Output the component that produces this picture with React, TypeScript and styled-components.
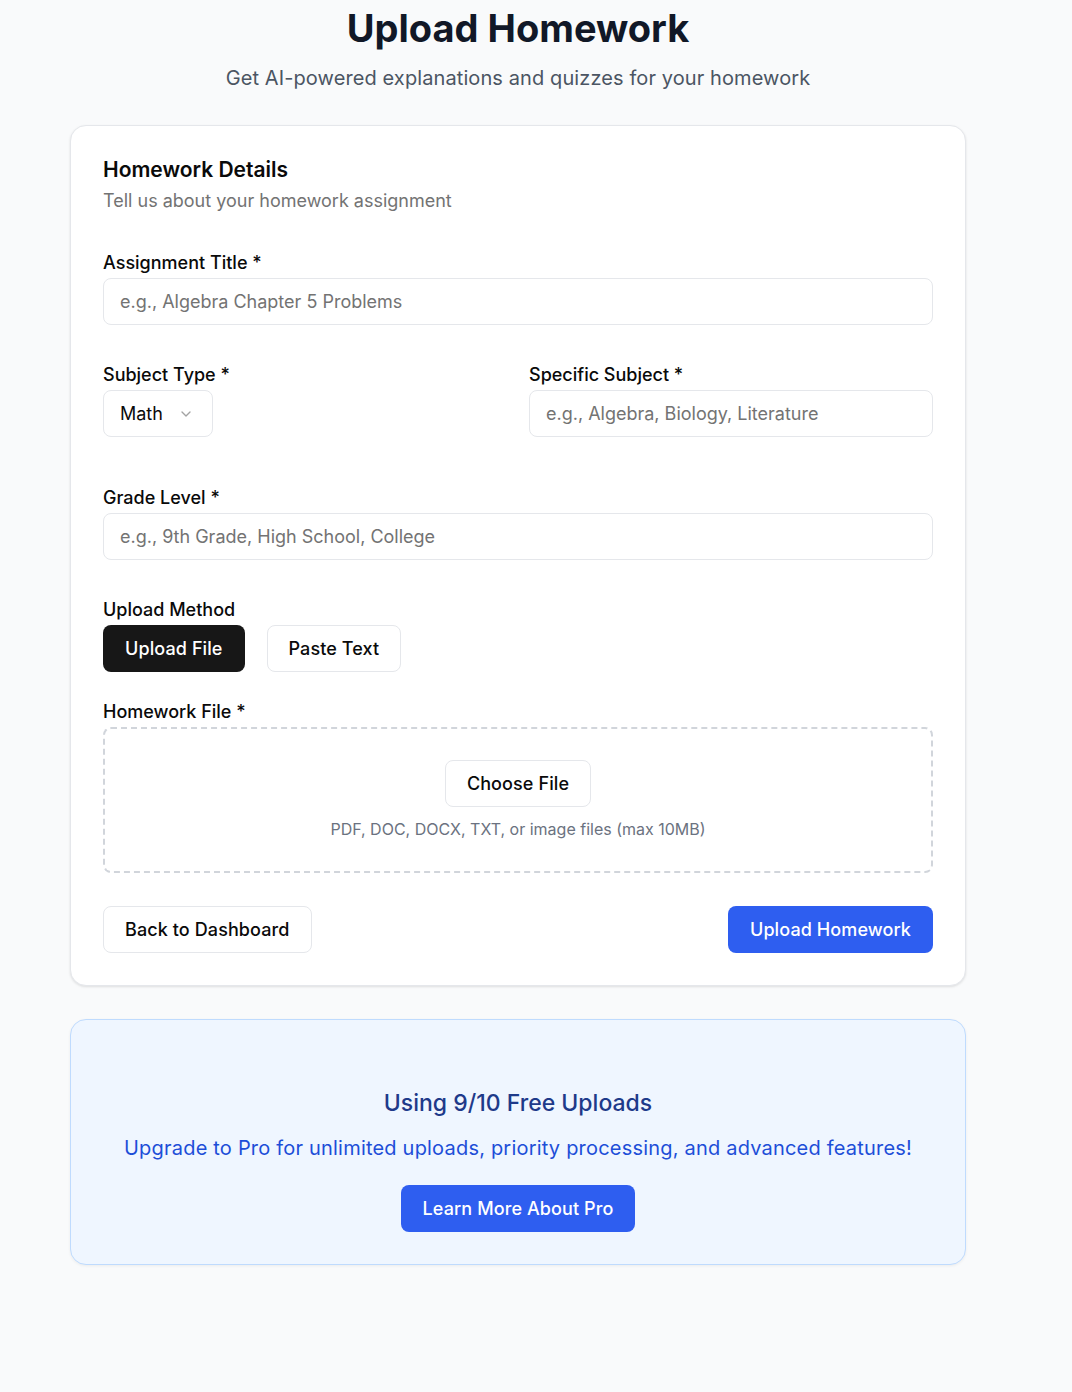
import React from "react";
import styled, { createGlobalStyle } from "styled-components";

const Global = createGlobalStyle`
  * { box-sizing: border-box; }
  html, body { margin: 0; padding: 0; background: #f9fafb; }
  body { font-family: Inter, "Noto Sans", sans-serif; color: #0a0a0a; }
  input, button { font-family: inherit; }
`;

const Page = styled.div`
  min-height: 1392px;
  padding: 8px 0 0 70px;
`;

const Column = styled.main`
  width: 896px;
  display: flex;
  flex-direction: column;
`;

const Header = styled.header`
  text-align: center;
  margin-bottom: 33px;
`;

const PageTitle = styled.h1`
  margin: 0;
  font-size: 38px;
  line-height: 40px;
  font-weight: 700;
  color: #111827;
`;

const PageSubtitle = styled.p`
  margin: 16px 0 0;
  font-size: 20px;
  line-height: 28px;
  letter-spacing: 0.1px;
  color: #4b5563;
`;

const Card = styled.section`
  background: #fff;
  border: 1px solid #e5e7eb;
  border-radius: 16px;
  box-shadow: 0 1px 3px rgba(0, 0, 0, 0.08), 0 1px 2px rgba(0, 0, 0, 0.04);
  padding: 32px;
`;

const CardTitle = styled.h2`
  margin: 0;
  font-size: 21px;
  line-height: 24px;
  font-weight: 600;
  color: #0a0a0a;
`;

const CardDesc = styled.p`
  margin: 7px 0 0;
  font-size: 18px;
  line-height: 24px;
  color: #737373;
`;

const Field = styled.div<{ $mt: number }>`
  display: flex;
  flex-direction: column;
  gap: 3px;
  margin-top: ${(p) => p.$mt}px;
`;

const Label = styled.label`
  font-size: 18px;
  line-height: 24px;
  font-weight: 500;
  color: #0a0a0a;
`;

const TextInput = styled.input`
  height: 47px;
  width: 100%;
  border: 1px solid #e5e7eb;
  border-radius: 8px;
  padding: 0 16px;
  font-size: 18px;
  color: #0a0a0a;
  background: #fff;
  outline: none;
  &::placeholder { color: #737373; }
`;

const TwoCols = styled.div<{ $mt: number }>`
  display: grid;
  grid-template-columns: 1fr 1fr;
  column-gap: 22px;
  margin-top: ${(p) => p.$mt}px;
`;

const SelectBox = styled.button`
  height: 47px;
  width: 110px;
  display: flex;
  align-items: center;
  justify-content: space-between;
  padding: 0 18px 0 16px;
  border: 1px solid #e5e7eb;
  border-radius: 8px;
  background: #fff;
  font-size: 18px;
  color: #0a0a0a;
`;

const ButtonRow = styled.div`
  display: flex;
  gap: 22px;
`;

const Btn = styled.button<{ $variant: "dark" | "outline" | "primary" }>`
  height: 47px;
  padding: 0 21px;
  border-radius: 8px;
  font-size: 18px;
  font-weight: 500;
  letter-spacing: 0.1px;
  cursor: pointer;
  border: 1px solid
    ${(p) => (p.$variant === "outline" ? "#e5e7eb" : "transparent")};
  background: ${(p) =>
    p.$variant === "dark" ? "#171717" : p.$variant === "primary" ? "#2e5ef0" : "#fff"};
  color: ${(p) => (p.$variant === "outline" ? "#0a0a0a" : "#fff")};
`;

const DropZone = styled.div`
  border: 2px dashed #d1d5db;
  border-radius: 8px;
  padding: 31px 32px 32px;
  display: flex;
  flex-direction: column;
  align-items: center;
  gap: 12px;
`;

const Hint = styled.p`
  margin: 0;
  font-size: 16px;
  line-height: 20px;
  color: #6b7280;
`;

const Actions = styled.div`
  display: flex;
  justify-content: space-between;
  margin-top: 33px;
`;

const Promo = styled.section`
  margin-top: 33px;
  background: #eff6ff;
  border: 1px solid #bfdbfe;
  border-radius: 16px;
  box-shadow: 0 1px 3px rgba(0, 0, 0, 0.06);
  padding: 67px 32px 32px;
  display: flex;
  flex-direction: column;
  align-items: center;
  text-align: center;
`;

const PromoTitle = styled.h3`
  margin: 0;
  font-size: 23px;
  line-height: 32px;
  font-weight: 500;
  color: #1e3a8a;
`;

const PromoText = styled.p`
  margin: 15px 0 23px;
  font-size: 20px;
  line-height: 28px;
  letter-spacing: 0.2px;
  color: #1d4ed8;
`;

const Chevron = () => (
  <svg width="16" height="16" viewBox="0 0 24 24" fill="none" stroke="#a3a3a3" strokeWidth="2" strokeLinecap="round" strokeLinejoin="round">
    <path d="m6 9 6 6 6-6" />
  </svg>
);

export default function App() {
  return (
    <>
      <Global />
      <Page>
        <Column>
          <Header>
            <PageTitle>Upload Homework</PageTitle>
            <PageSubtitle>Get AI-powered explanations and quizzes for your homework</PageSubtitle>
          </Header>

          <Card>
            <CardTitle>Homework Details</CardTitle>
            <CardDesc>Tell us about your homework assignment</CardDesc>

            <Field $mt={38}>
              <Label>Assignment Title *</Label>
              <TextInput placeholder="e.g., Algebra Chapter 5 Problems" />
            </Field>

            <TwoCols $mt={38}>
              <Field $mt={0}>
                <Label>Subject Type *</Label>
                <SelectBox>
                  <span>Math</span>
                  <Chevron />
                </SelectBox>
              </Field>
              <Field $mt={0}>
                <Label>Specific Subject *</Label>
                <TextInput placeholder="e.g., Algebra, Biology, Literature" />
              </Field>
            </TwoCols>

            <Field $mt={49}>
              <Label>Grade Level *</Label>
              <TextInput placeholder="e.g., 9th Grade, High School, College" />
            </Field>

            <Field $mt={38}>
              <Label>Upload Method</Label>
              <ButtonRow>
                <Btn $variant="dark">Upload File</Btn>
                <Btn $variant="outline">Paste Text</Btn>
              </ButtonRow>
            </Field>

            <Field $mt={28}>
              <Label>Homework File *</Label>
              <DropZone>
                <Btn $variant="outline">Choose File</Btn>
                <Hint>PDF, DOC, DOCX, TXT, or image files (max 10MB)</Hint>
              </DropZone>
            </Field>

            <Actions>
              <Btn $variant="outline">Back to Dashboard</Btn>
              <Btn $variant="primary">Upload Homework</Btn>
            </Actions>
          </Card>

          <Promo>
            <PromoTitle>Using 9/10 Free Uploads</PromoTitle>
            <PromoText>Upgrade to Pro for unlimited uploads, priority processing, and advanced features!</PromoText>
            <Btn $variant="primary">Learn More About Pro</Btn>
          </Promo>
        </Column>
      </Page>
    </>
  );
}
